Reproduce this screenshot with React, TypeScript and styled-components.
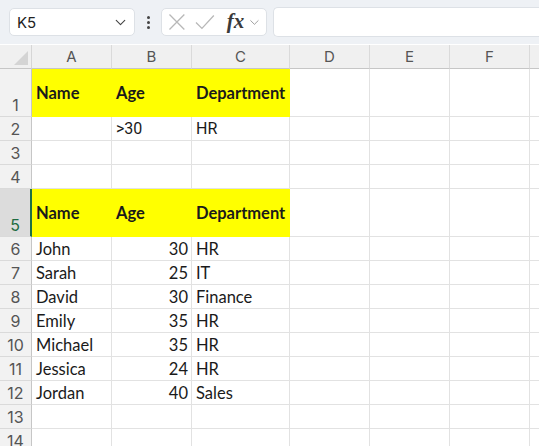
import React from 'react';
import styled, { createGlobalStyle } from 'styled-components';
import { ChevronDown } from 'lucide-react';

const GlobalStyle = createGlobalStyle`
  html, body {
    margin: 0;
    padding: 0;
    width: 539px;
    height: 446px;
    overflow: hidden;
    background: #ffffff;
    font-family: 'Lato', 'Noto Sans', sans-serif;
  }
`;

const COLS = ['A', 'B', 'C', 'D', 'E', 'F', 'G'];
const COL_WIDTHS = [80, 80, 98, 80, 80, 80, 80];

type Cell = { text?: string; bold?: boolean; right?: boolean; fill?: boolean; alt?: boolean };
type Row = { height: number; cells: Cell[] };

const header = (): Cell[] => [
  { text: 'Name', bold: true, fill: true },
  { text: 'Age', bold: true, fill: true },
  { text: 'Department', bold: true, fill: true },
];

const person = (name: string, age: string, dept: string): Cell[] => [
  { text: name },
  { text: age, right: true },
  { text: dept },
];

const rows: Row[] = [
  { height: 48, cells: header() },
  { height: 24, cells: [{}, { text: '>30', alt: true }, { text: 'HR', alt: true }] },
  { height: 24, cells: [] },
  { height: 24, cells: [] },
  { height: 48, cells: header() },
  { height: 24, cells: person('John', '30', 'HR') },
  { height: 24, cells: person('Sarah', '25', 'IT') },
  { height: 24, cells: person('David', '30', 'Finance') },
  { height: 24, cells: person('Emily', '35', 'HR') },
  { height: 24, cells: person('Michael', '35', 'HR') },
  { height: 24, cells: person('Jessica', '24', 'HR') },
  { height: 24, cells: person('Jordan', '40', 'Sales') },
  { height: 24, cells: [] },
  { height: 24, cells: [] },
];

const CancelIcon = () => (
  <svg width="18" height="18" viewBox="0 0 18 18">
    <path d="M1.5 1.5 L16.5 16.5 M16.5 1.5 L1.5 16.5" stroke="#b8b8b8" strokeWidth="1.3" fill="none" />
  </svg>
);

const EnterIcon = () => (
  <svg width="20" height="16" viewBox="0 0 20 16">
    <path d="M1 8.5 L7 14.5 L19 1.5" stroke="#b8b8b8" strokeWidth="1.3" fill="none" />
  </svg>
);

export default function App() {
  return (
    <>
      <GlobalStyle />
      <Toolbar>
        <NameBox>
          <NameText>K5</NameText>
          <ChevronDown size={17} strokeWidth={1.6} color="#444" />
        </NameBox>
        <Kebab>
          <Dot />
          <Dot />
          <Dot />
        </Kebab>
        <FormulaControls>
          <CancelIcon />
          <EnterIcon />
          <Fx>fx</Fx>
          <ChevronDown size={15} strokeWidth={1.3} color="#8a8a8a" />
        </FormulaControls>
        <FormulaInput />
      </Toolbar>
      <Sheet $template={COL_WIDTHS.map((w) => `${w}px`).join(' ')}>
        <Corner>
          <CornerTriangle />
        </Corner>
        {COLS.map((c, j) => (
          <ColHeader key={c}>{j < COLS.length - 1 ? c : ''}</ColHeader>
        ))}
        {rows.map((row, i) => (
          <React.Fragment key={i}>
            <RowHeader $h={row.height} $active={i === 4}>
              {i + 1}
            </RowHeader>
            {COLS.map((c, j) => {
              const cell = row.cells[j] || {};
              return (
                <GridCell
                  key={c}
                  $fill={cell.fill}
                  $bold={cell.bold}
                  $right={cell.right}
                  $alt={cell.alt}
                >
                  {cell.text}
                </GridCell>
              );
            })}
          </React.Fragment>
        ))}
      </Sheet>
    </>
  );
}

const Toolbar = styled.div`
  display: flex;
  align-items: center;
  height: 44px;
  padding: 0 0 0 9px;
  background: #eef1f5;
  box-sizing: border-box;
`;

const NameBox = styled.div`
  display: flex;
  align-items: center;
  justify-content: space-between;
  width: 126px;
  height: 28px;
  padding: 0 5px 0 7px;
  box-sizing: border-box;
  background: #fff;
  border: 1px solid #dde1e6;
  border-radius: 5px;
`;

const NameText = styled.span`
  font-family: 'Inter', 'Noto Sans', sans-serif;
  font-size: 15px;
  color: #222;
`;

const Kebab = styled.div`
  display: flex;
  flex-direction: column;
  gap: 2px;
  width: 26px;
  align-items: center;
`;

const Dot = styled.span`
  width: 3px;
  height: 3px;
  border-radius: 50%;
  background: #444;
`;

const FormulaControls = styled.div`
  display: flex;
  align-items: center;
  gap: 9px;
  width: 106px;
  height: 28px;
  padding: 0 4px 0 6px;
  box-sizing: border-box;
  background: #fff;
  border: 1px solid #dde1e6;
  border-radius: 5px;
`;

const Fx = styled.span`
  font-family: 'Liberation Serif', 'DejaVu Serif', serif;
  font-style: italic;
  font-weight: 600;
  font-size: 21px;
  line-height: 1;
  color: #3a3a3a;
  margin-left: 3px;
  margin-right: -6px;
  margin-top: -2px;
`;

const FormulaInput = styled.div`
  flex: 1;
  height: 28px;
  margin-left: 6px;
  background: #fff;
  border: 1px solid #dde1e6;
  border-right: none;
  border-radius: 5px 0 0 5px;
`;

const Sheet = styled.div<{ $template: string }>`
  display: grid;
  grid-template-columns: 32px ${(p) => p.$template};
  grid-auto-rows: auto;
  margin-top: 1px;
`;

const Corner = styled.div`
  position: relative;
  height: 24px;
  background: #f0f0f0;
  border-right: 1px solid #d6d6d6;
  border-bottom: 1px solid #c6c6c6;
  box-sizing: border-box;
`;

const CornerTriangle = styled.div`
  position: absolute;
  right: 3px;
  bottom: 3px;
  width: 0;
  height: 0;
  border-left: 14px solid transparent;
  border-bottom: 14px solid #d4d4d4;
`;

const ColHeader = styled.div`
  height: 24px;
  display: flex;
  align-items: center;
  justify-content: center;
  background: #f0f0f0;
  border-right: 1px solid #dadada;
  border-bottom: 1px solid #c6c6c6;
  box-sizing: border-box;
  font-family: 'Inter', 'Noto Sans', sans-serif;
  font-size: 15px;
  color: #555;
`;

const RowHeader = styled.div<{ $h: number; $active?: boolean }>`
  height: ${(p) => p.$h}px;
  display: flex;
  align-items: flex-end;
  justify-content: center;
  padding-bottom: 1px;
  box-sizing: border-box;
  background: ${(p) => (p.$active ? '#dcdcdc' : '#f2f2f2')};
  border-right: ${(p) => (p.$active ? '2px solid #1e7145' : '1px solid #c6c6c6')};
  border-bottom: 1px solid #dadada;
  font-family: 'Inter', 'Noto Sans', sans-serif;
  font-size: 16px;
  color: ${(p) => (p.$active ? '#1e6b41' : '#555')};
`;

const GridCell = styled.div<{ $fill?: boolean; $bold?: boolean; $right?: boolean; $alt?: boolean }>`
  display: flex;
  align-items: center;
  justify-content: ${(p) => (p.$right ? 'flex-end' : 'flex-start')};
  padding: 0 3px 0 4px;
  box-sizing: border-box;
  overflow: hidden;
  white-space: nowrap;
  background: ${(p) => (p.$fill ? '#ffff00' : '#fff')};
  border-right: 1px solid ${(p) => (p.$fill ? '#ffff00' : '#e2e2e2')};
  border-bottom: 1px solid ${(p) => (p.$fill ? '#ffff00' : '#e2e2e2')};
  font-family: ${(p) => (p.$alt ? "'Roboto', 'Liberation Sans', sans-serif" : "'Lato', 'Noto Sans', sans-serif")};
  font-size: ${(p) => (p.$alt ? '16px' : '16.5px')};
  font-weight: ${(p) => (p.$bold ? 700 : 400)};
  color: #1a1a1a;
`;
